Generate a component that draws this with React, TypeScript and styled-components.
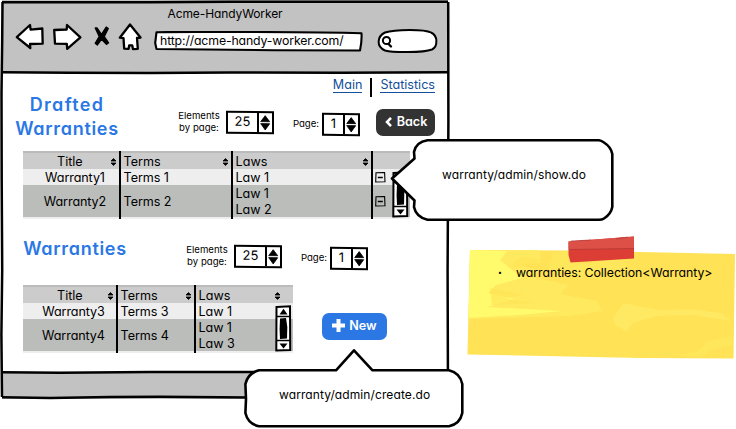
import React from "react";
import styled, { createGlobalStyle } from "styled-components";

const GlobalStyle = createGlobalStyle`
  * { box-sizing: border-box; }
  body { margin: 0; background: #fff; overflow: hidden; }
  #root { font-family: Inter, "Open Sans", sans-serif; font-feature-settings: "cv11" 1; font-size: 12.6px; line-height: 16px; color: #000; }
  svg { display: block; }
`;

const Stage = styled.div`
  position: relative;
  width: 736px;
  height: 429px;
  overflow: hidden;
`;

const Window = styled.main`
  position: relative;
  width: 449px;
  height: 399px;
  display: flex;
  flex-direction: column;
`;

const Overlay = styled.svg`
  position: absolute;
  left: 0;
  top: 0;
  pointer-events: none;
`;

const Header = styled.header`
  height: 73px;
  margin: 0 1px 0 2px;
  padding: 6px 0 0;
  background: #c2c2c2;
`;

const WindowTitle = styled.div`
  height: 15px;
  text-align: center;
  font-size: 12px;
  letter-spacing: -0.1px;
`;

const Toolbar = styled.div`
  display: flex;
  align-items: flex-start;
  padding-left: 13px;
`;

const Slot = styled.div<{ $w: number; $mt?: number }>`
  flex: none;
  width: ${(p) => p.$w}px;
  margin-top: ${(p) => p.$mt ?? 0}px;
`;

const Field = styled.div<{ $w: number; $h: number }>`
  position: relative;
  width: ${(p) => p.$w}px;
  height: ${(p) => p.$h}px;
`;

const Url = styled.span`
  position: relative;
  display: block;
  padding: 2px 0 0 6px;
  font-size: 12.3px;
  letter-spacing: -0.14px;
  white-space: nowrap;
`;

const Body = styled.section`
  flex: 1;
  padding-left: 3px;
`;

const Nav = styled.nav`
  display: flex;
  align-items: center;
  justify-content: flex-end;
  height: 29px;
  padding: 0 14px 0 0;
`;

const NavLink = styled.a`
  height: 15px;
  margin-top: -4px;
  line-height: 14px;
  color: #134f9c;
  border-bottom: 1px solid #134f9c;
`;

const NavRule = styled.i`
  width: 2px;
  height: 19px;
  margin: 0 8px;
  background: #000;
`;

const Controls = styled.div<{ $h: number }>`
  display: flex;
  align-items: flex-start;
  height: ${(p) => p.$h}px;
`;

const Heading = styled.h1<{ $ml: number; $mt: number }>`
  width: 104px;
  margin: ${(p) => p.$mt}px -2px 0 ${(p) => p.$ml}px;
  font-size: 18px;
  font-weight: 600;
  line-height: 24px;
  letter-spacing: 0.7px;
  text-align: center;
  white-space: nowrap;
  color: #2b78e4;
`;

const HeadingLine = styled.span`
  display: block;
  letter-spacing: 1.3px;
`;

const Label = styled.div<{ $ml: number; $mt: number; $w: number }>`
  width: ${(p) => p.$w}px;
  margin: ${(p) => p.$mt}px 0 0 ${(p) => p.$ml}px;
  font-size: 9.6px;
  line-height: 12px;
  text-align: center;
  white-space: nowrap;
`;

const SpinnerBox = styled.div<{ $w: number; $ml: number; $mt: number }>`
  display: flex;
  width: ${(p) => p.$w}px;
  height: 23px;
  margin: ${(p) => p.$mt}px 0 0 ${(p) => p.$ml}px;
  border: 2px solid #000;
  transform: skewY(0.6deg);
`;

const SpinnerValue = styled.span`
  flex: 1;
  line-height: 17px;
  text-align: center;
  font-size: 13px;
`;

const SpinnerArrows = styled.span`
  width: 15px;
  border-left: 2px solid #000;
`;

const Button = styled.button<{ $w: number; $bg: string }>`
  display: flex;
  align-items: center;
  justify-content: center;
  gap: 4px;
  width: ${(p) => p.$w}px;
  height: 27px;
  padding: 0 0 2px;
  border: 0;
  border-radius: 7px;
  background: ${(p) => p.$bg};
  color: #fff;
  font: 600 12.6px/16px Inter, sans-serif;
  font-feature-settings: "cv11" 1;
`;

const BackSlot = styled.div`
  margin: 7px 0 0 16px;
`;

const Table = styled.div<{ $cols: string }>`
  display: grid;
  grid-template-columns: ${(p) => p.$cols};
  width: max-content;
  height: 68px;
  margin-left: 20px;
  background: linear-gradient(#bbb 0 2px, #ccc 2px 18px, #eee 18px 34px, #bbbdba 34px 66px, #eee 66px);
`;

const Column = styled.div<{ $center?: boolean; $line?: boolean }>`
  display: flex;
  flex-direction: column;
  padding: 2px 0 0 ${(p) => (p.$center ? 0 : 2.6)}px;
  border-right: ${(p) => (p.$line ? "2px solid #000" : "0")};
`;

const HeadCell = styled.div<{ $center?: boolean; $wide?: boolean }>`
  display: flex;
  align-items: center;
  justify-content: space-between;
  height: 16px;
  margin-right: ${(p) => (p.$wide ? -8 : 0)}px;
  padding: 2px 2px 0 ${(p) => (p.$center ? 34 : 0)}px;
`;

const Cell = styled.div<{ $h?: number; $center?: boolean }>`
  height: ${(p) => p.$h ?? 16}px;
  line-height: ${(p) => (p.$h ?? 16) - 2}px;
  padding: 2px 0 0 ${(p) => (p.$center ? 8 : 0)}px;
  text-align: ${(p) => (p.$center ? "center" : "left")};
  letter-spacing: -0.1px;
  white-space: nowrap;
`;

const IconCell = styled.div<{ $h: number }>`
  display: flex;
  align-items: center;
  height: ${(p) => p.$h}px;
  margin-left: -0.6px;
`;

const ScrollColumn = styled.div`
  padding-top: 20px;
`;

const BottomRow = styled.div`
  display: flex;
  align-items: flex-start;
  gap: 29px;
`;

const NewSlot = styled.div`
  margin-top: 28px;
`;

const Footer = styled.footer`
  height: 27px;
  margin: 0 1px 0 2px;
  background: #c2c2c2;
`;

const Callout = styled.aside<{ $x: number; $y: number; $w: number; $h: number }>`
  position: absolute;
  left: ${(p) => p.$x}px;
  top: ${(p) => p.$y}px;
  width: ${(p) => p.$w}px;
  height: ${(p) => p.$h}px;
`;

const CalloutText = styled.p<{ $x: number; $y: number }>`
  position: relative;
  margin: 0;
  padding: ${(p) => p.$y}px 0 0 ${(p) => p.$x}px;
  font-size: 12px;
  letter-spacing: 0.1px;
  white-space: nowrap;
`;

const NoteText = styled.ul`
  position: relative;
  display: flex;
  margin: 0;
  padding: 30px 0 0 32px;
  list-style: none;
  font-size: 12.3px;
  letter-spacing: -0.04px;
  white-space: nowrap;
`;

const Bullet = styled.li`
  width: 18px;
  font-size: 7px;
`;

const Sort = () => (
  <svg width="7" height="8" viewBox="0 0 7 8">
    <path d="M3.5.5 6 3H1zM3.5 7.5 1 5h5z" stroke="#000" strokeWidth=".8" strokeLinejoin="round" />
  </svg>
);

const Minus = () => (
  <svg width="11" height="11" viewBox="0 0 11 11">
    <path d="M1 .8 9.6.5 10 9.8.7 10z" fill="none" stroke="#000" strokeWidth="1.1" />
    <path d="M2.8 5.5h5" stroke="#000" strokeWidth="1.5" />
  </svg>
);

const Scrollbar = () => (
  <svg width="17" height="47" viewBox="0 0 17 47">
    <path d="M1.5 2 15 1.2 15.2 45 1.3 45.5z" fill="#fff" stroke="#000" strokeWidth="2" />
    <path d="M1 11.5h14M1 35.5h14" stroke="#000" strokeWidth="1.7" />
    <path d="m8.5 3.8 4 5.7h-8zM4.5 38.5h8l-4 5z" />
    <path d="M5 13.5 11 13l1.300 9-.3 11.500-7 .5-.4-10z" />
  </svg>
);

const Spinner = ({ value, w, ml, mt }: { value: string; w: number; ml: number; mt: number }) => (
  <SpinnerBox $w={w} $ml={ml} $mt={mt}>
    <SpinnerValue>{value}</SpinnerValue>
    <SpinnerArrows>
      <svg width="12" height="19" viewBox="0 0 12 19">
        <path d="M6.2 2.5 10.7 8.500H1.700zM1.700 10.500h9l-4.500 6.300z" stroke="#000" strokeWidth=".8" strokeLinejoin="round" />
      </svg>
    </SpinnerArrows>
  </SpinnerBox>
);

type TableProps = { cols: string; rows: [string, string, string, string]; actions?: boolean };

const WarrantyTable = ({ cols, rows, actions }: TableProps) => (
  <Table $cols={cols}>
    <Column $center $line>
      <HeadCell $center>Title<Sort /></HeadCell>
      <Cell $center>Warranty{rows[0]}</Cell>
      <Cell $center $h={32}>Warranty{rows[1]}</Cell>
    </Column>
    <Column $line>
      <HeadCell>Terms<Sort /></HeadCell>
      <Cell>Terms {rows[0]}</Cell>
      <Cell $h={32}>Terms {rows[1]}</Cell>
    </Column>
    <Column $line={actions}>
      <HeadCell $wide={!actions}>Laws<Sort /></HeadCell>
      <Cell>Law {rows[2]}</Cell>
      <Cell>Law 1</Cell>
      <Cell>Law {rows[3]}</Cell>
    </Column>
    {actions && (
      <Column>
        <IconCell $h={16} />
        <IconCell $h={16}><Minus /></IconCell>
        <IconCell $h={32}><Minus /></IconCell>
      </Column>
    )}
    <ScrollColumn><Scrollbar /></ScrollColumn>
  </Table>
);

const outline = { fill: "#fff", stroke: "#000", strokeWidth: 2.3, strokeLinejoin: "round" as const };

export default function App() {
  return (
    <>
      <GlobalStyle />
      <Stage>
        <Window>
          <Header>
            <WindowTitle>Acme-HandyWorker</WindowTitle>
            <Toolbar>
              <Slot $w={38} $mt={2}>
                <svg width="30" height="28" viewBox="15 23 30 28">
                  <path d="M16.800 37.200 30 25l.6 4.700 11.700-1.200.4 15.200L30 44l.3 4z" {...outline} />
                </svg>
              </Slot>
              <Slot $w={40} $mt={2}>
                <svg width="30" height="28" viewBox="53 23 30 28">
                  <path d="M80.400 37.300 67 25l-.3 4.500L54.200 30l.8 13.600 11.800.3.4 4.900z" {...outline} />
                </svg>
              </Slot>
              <Slot $w={25} $mt={2}>
                <svg width="17" height="28" viewBox="93 23 17 28">
                  <path d="m97 28 4.500 6.300 4.700-7.300 2.100 1.500-4 8 4.300 6.300-2.200 1.600-4.800-5.200-4.300 5.800-2.100-1.700 4-6.800L95.200 28z" stroke="#000" strokeWidth="1.300" strokeLinejoin="round" />
                </svg>
              </Slot>
              <Slot $w={36} $mt={2}>
                <svg width="25" height="28" viewBox="118 23 25 28">
                  <path d="m130 24.500 10.500 13-3.500.5.800 10.800-4.800.3-.8-3.800h-3l-.6 3.600-4.400-.2-.7-10.500-3.700-.5z" {...outline} />
                </svg>
              </Slot>
              <Slot $w={223} $mt={10}>
                <Field $w={209} $h={21}>
                  <Overlay width="209" height="21" viewBox="0 0 209 21">
                    <path d="M2.500 1.200C30 .7 50 1 80 1S170 1 207.500 2.300Q208 10 206 19.500L120 19.200 2.500 18 1.200 12z" {...outline} strokeWidth={2.1} />
                  </Overlay>
                  <Url>http://acme-handy-worker.com/</Url>
                </Field>
              </Slot>
              <Slot $w={61} $mt={7}>
                <svg width="61" height="26" viewBox="377 28 61 26">
                  <path d="M385 32.500c10-3.500 40-3.500 46 0 7 3 7 14 1 17-9 3.500-40 3-47 1-9-4-8-14 0-18z" {...outline} strokeWidth={2} />
                  <circle cx="386.500" cy="40.500" r="3.600" fill="none" stroke="#000" strokeWidth="2" />
                  <path d="m388.500 44 2.500 2.500" stroke="#000" strokeWidth="2.400" strokeLinecap="round" />
                </svg>
              </Slot>
            </Toolbar>
          </Header>
          <Body>
            <Nav>
              <NavLink>Main</NavLink>
              <NavRule />
              <NavLink>Statistics</NavLink>
            </Nav>
            <Controls $h={49}>
              <Heading $ml={12} $mt={-9}><HeadingLine>Drafted</HeadingLine>Warranties</Heading>
              <Label $ml={59} $mt={8} $w={46}>Elements<br />by page:</Label>
              <Spinner value="25" w={48} ml={4} mt={9} />
              <Label $ml={18} $mt={16} $w={28}>Page:</Label>
              <Spinner value="1" w={38} ml={2} mt={11} />
              <BackSlot>
                <Button $w={59} $bg="#333">
                  <svg width="9" height="12" viewBox="0 0 9 12"><path d="M7 1.800 3 6l4 4.200" fill="none" stroke="#fff" strokeWidth="2.600" /></svg>
                  Back
                </Button>
              </BackSlot>
            </Controls>
            <WarrantyTable cols="98px 112px 140px 19px 18px" rows={["1", "2", "1", "2"]} actions />
            <Controls $h={66}>
              <Heading $ml={20} $mt={18}>Warranties</Heading>
              <Label $ml={59} $mt={25} $w={46}>Elements<br />by page:</Label>
              <Spinner value="25" w={48} ml={4} mt={26} />
              <Label $ml={18} $mt={33} $w={28}>Page:</Label>
              <Spinner value="1" w={38} ml={2} mt={28} />
            </Controls>
            <BottomRow>
              <WarrantyTable cols="95px 78px 79px 18px" rows={["3", "4", "1", "3"]} />
              <NewSlot>
                <Button $w={65} $bg="#2b78e4">
                  <svg width="13" height="13" viewBox="0 0 13 13"><path d="M6.500 0v13M0 6.500h13" stroke="#fff" strokeWidth="4" /></svg>
                  New
                </Button>
              </NewSlot>
            </BottomRow>
          </Body>
          <Footer />
          <Overlay width="452" height="402" fill="none" stroke="#000" strokeWidth="2.500">
            <path d="M2 2.300H150L230 1.800H448M2.500 2 2.200 40 1.500 93 1.700 180 2.200 270 1.400 335 2 397M448.200 2 448.400 120 447.600 270 448 398" />
            <path d="M2 72.200 70 72.700 150 72.900 230 72.500 340 72.700 448 72.200M2 372.200 60 372.800 150 371.900 448 372.400M2 397.200 50 398 110 397 160 396.700 250 397.600 448 398" />
          </Overlay>
        </Window>

        <Callout $x={390} $y={137} $w={226} $h={85}>
          <Overlay width="226" height="85" viewBox="390 137 226 85">
            <path d="M427.500 140.300H599Q601 140.500 604 142.500 611 147 612.300 154V207Q611 214 604 218.500 602 219.800 599 219.800H427.500Q416 217 414 207L414.500 200.500 392 178.500 414.500 158.500 414 152Q416 142 427.500 140.300z" {...outline} strokeWidth={2.6} />
          </Overlay>
          <CalloutText $x={52} $y={30}>warranty/admin/show.do</CalloutText>
        </Callout>

        <Callout $x={243} $y={347} $w={223} $h={82}>
          <Overlay width="223" height="82" viewBox="243 347 223 82">
            <path d="M259 370.300H336L354 350.300 372.500 370.300H449Q460 373 462.300 384V413Q460 424 449 426.300H259Q248 424 245.400 413L246 399 245.400 384Q248 373 259 370.300z" {...outline} strokeWidth={2.6} />
          </Overlay>
          <CalloutText $x={36} $y={40}>warranty/admin/create.do</CalloutText>
        </Callout>

        <Callout $x={466} $y={235} $w={270} $h={124}>
          <Overlay width="270" height="124" viewBox="466 235 270 124">
            <path d="M470 250 568 250.500 735 254 733.500 358.500 640 358 467.500 354.500z" fill="#ffe255" />
            <path d="M470 250 540 250.300 541 263 519 265 540 271 527 276 569 285 560 294 597 301 602 311 570 316 510 318 468.500 319z" fill="#ffe95e" />
            <path d="M470 250 507 251 500 260 522 278 496 285 488 293 515 299 487 307 562 311 520 315 468.500 318z" fill="#ffff70" opacity=".8" />
            <path d="m520 257 21 2-10 6-22 3zM490 288l34 7-20 3 30 5-42 2z" fill="#ffe255" opacity=".6" />
            <path d="m613 318 11-15 18 4 20 3 29-1 30 4 11 8-40-6-35 1-24 7-7 8-11-6z" fill="#ffeb68" opacity=".75" />
            <path d="M675 355 697 352 708 341 732 336 733 345 711 350 701 357z" fill="#ffe95e" opacity=".7" />
            <path d="m553 252 17-1 8 13 45-5 5 8-50 10-30-7z" fill="#ffeb62" opacity=".5" />
            <path d="M568.500 241.500 634 236.500 634 258.500 570.500 262.500 568.500 255z" fill="#dc3e36" />
            <path d="M568.500 241.500 634 236.500v12l-65.500 1z" fill="#dc5047" />
            <path d="M569 249.500 634 248.500M571 241l20-1M616 239l12-2" fill="none" stroke="#ad3734" strokeWidth=".7" />
          </Overlay>
          <NoteText><Bullet aria-hidden="true">•</Bullet><li>warranties: Collection&lt;Warranty&gt;</li></NoteText>
        </Callout>
      </Stage>
    </>
  );
}
